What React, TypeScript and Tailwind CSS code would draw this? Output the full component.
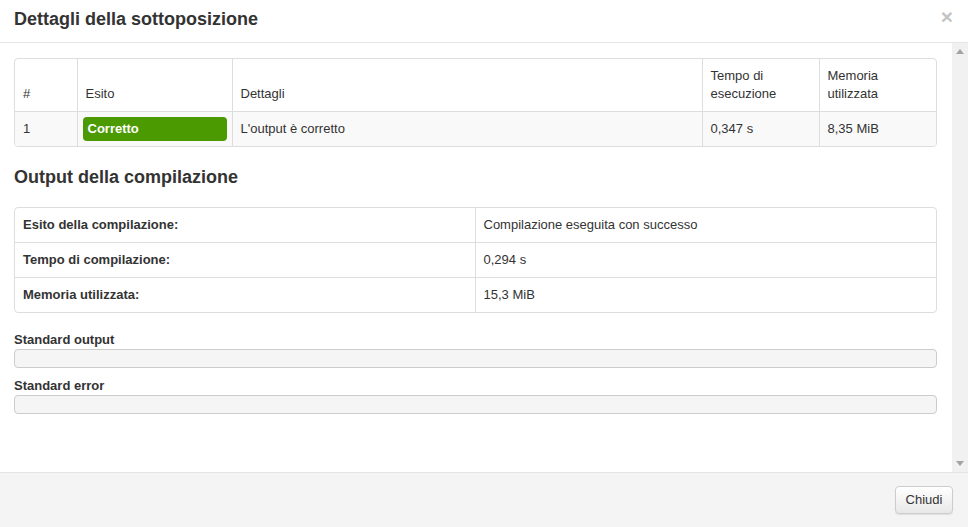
import React from "react";

const RESULT_COLS = [
  { label: "#", w: "w-[62px]" },
  { label: "Esito", w: "w-[155px]" },
  { label: "Dettagli", w: "w-[470px]" },
  { label: "Tempo di esecuzione", w: "w-[117px]" },
  { label: "Memoria utilizzata", w: "w-[117px]" },
];

const COMPILE_ROWS = [
  { label: "Esito della compilazione:", value: "Compilazione eseguita con successo" },
  { label: "Tempo di compilazione:", value: "0,294 s" },
  { label: "Memoria utilizzata:", value: "15,3 MiB" },
];

export default function App() {
  return (
    <div className="w-[968px] h-[527px] flex flex-col bg-white text-[13px] text-[#333] font-['Liberation_Sans',Arial,sans-serif] overflow-hidden">
      {/* Header */}
      <div className="h-[43px] shrink-0 flex items-start justify-between border-b border-[#e5e5e5] pl-[14px] pr-[15px]">
        <h4 className="pt-[9px] text-[18px] leading-[20px] font-bold text-[#333]">
          Dettagli della sottoposizione
        </h4>
        <button className="pt-[6px] text-[21px] leading-[21px] font-bold text-[#c4c4c4]">×</button>
      </div>

      {/* Body */}
      <div className="flex-1 flex min-h-0">
        <div className="flex-1 pl-[14px] pr-[15px] pt-[15px]">
          {/* Risultati */}
          <div className="border border-[#ddd] rounded-[4px] overflow-hidden">
            <table className="w-full table-fixed border-collapse">
              <thead>
                <tr>
                  {RESULT_COLS.map((c, i) => (
                    <th
                      key={c.label}
                      className={`${c.w} ${i > 0 ? "border-l border-[#ddd]" : ""} h-[52px] px-[8px] py-[8px] align-bottom text-left font-normal leading-[18px]`}
                    >
                      {c.label === "Tempo di esecuzione" ? (
                        <>Tempo di<br />esecuzione</>
                      ) : c.label === "Memoria utilizzata" ? (
                        <>Memoria<br />utilizzata</>
                      ) : (
                        c.label
                      )}
                    </th>
                  ))}
                </tr>
              </thead>
              <tbody>
                <tr className="bg-[#f9f9f9] border-t border-[#ddd]">
                  <td className="h-[34px] px-[8px] leading-[18px]">1</td>
                  <td className="border-l border-[#ddd] px-[5px] py-[5px]">
                    <div className="h-[24px] rounded-[4px] bg-[#4b9a02] px-[5px] leading-[24px] font-bold text-white">
                      Corretto
                    </div>
                  </td>
                  <td className="border-l border-[#ddd] px-[8px] leading-[18px]">L'output è corretto</td>
                  <td className="border-l border-[#ddd] px-[8px] leading-[18px]">0,347 s</td>
                  <td className="border-l border-[#ddd] px-[8px] leading-[18px]">8,35 MiB</td>
                </tr>
              </tbody>
            </table>
          </div>

          {/* Compilazione */}
          <h3 className="mt-[20px] mb-[20px] text-[18px] leading-[20px] font-bold">Output della compilazione</h3>
          <div className="border border-[#ddd] rounded-[4px] overflow-hidden">
            <table className="w-full table-fixed border-collapse">
              <tbody>
                {COMPILE_ROWS.map((r, i) => (
                  <tr key={r.label} className={i > 0 ? "border-t border-[#ddd]" : ""}>
                    <th className={`w-[460px] ${i > 0 ? "h-[35px]" : "h-[34px]"} px-[8px] text-left font-bold leading-[18px]`}>{r.label}</th>
                    <td className="border-l border-[#ddd] px-[8px] leading-[18px]">{r.value}</td>
                  </tr>
                ))}
              </tbody>
            </table>
          </div>

          <div className="mt-[18px] font-bold leading-[18px]">Standard output</div>
          <div className="h-[19px] rounded-[4px] border border-[#ccc] bg-[#f5f5f5]" />
          <div className="mt-[9px] font-bold leading-[18px]">Standard error</div>
          <div className="h-[19px] rounded-[4px] border border-[#ccc] bg-[#f5f5f5]" />
        </div>

        {/* Scrollbar */}
        <div className="w-[16px] shrink-0 bg-[#f1f1f1] flex flex-col items-center justify-between py-[6px]">
          <svg width="8" height="5" viewBox="0 0 8 5"><path d="M0 5 L4 0 L8 5 Z" fill="#a3a3a3" /></svg>
          <svg width="8" height="5" viewBox="0 0 8 5"><path d="M0 0 L8 0 L4 5 Z" fill="#a3a3a3" /></svg>
        </div>
      </div>

      {/* Footer */}
      <div className="h-[55px] shrink-0 border-t border-[#e5e5e5] bg-[#f4f4f4] flex items-center justify-end pr-[15px]">
        <button className="h-[28px] w-[58px] rounded-[4px] border border-[#ccc] bg-gradient-to-b from-white to-[#e8e8e8] text-[13px] text-[#333] shadow-[0_1px_1px_rgba(0,0,0,0.08)]">
          Chiudi
        </button>
      </div>
    </div>
  );
}
